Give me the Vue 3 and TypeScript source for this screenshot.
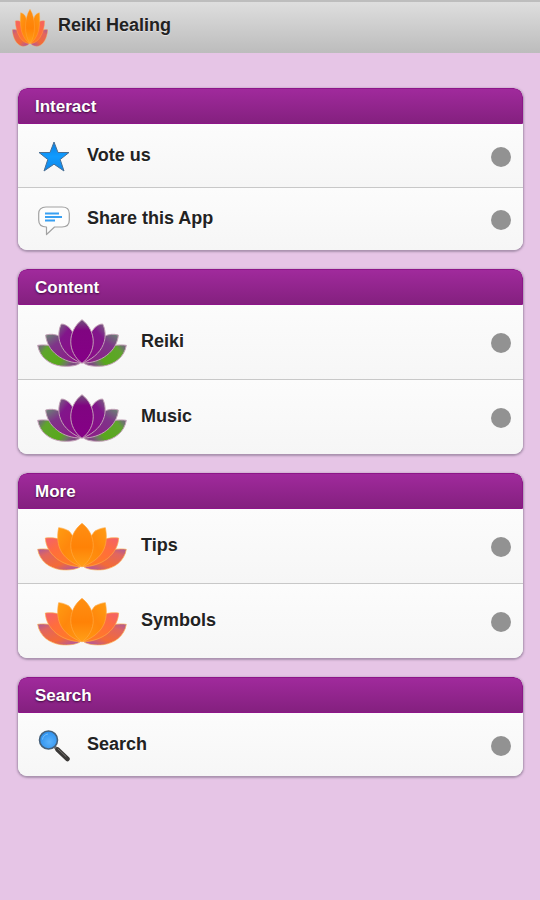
<script setup lang="ts">
type IconName = 'star' | 'chat' | 'lotus-purple' | 'lotus-orange' | 'magnifier'

interface Entry {
  label: string
  icon: IconName
}

interface Section {
  title: string
  entries: Entry[]
}

const sections: Section[] = [
  {
    title: 'Interact',
    entries: [
      { label: 'Vote us', icon: 'star' },
      { label: 'Share this App', icon: 'chat' },
    ],
  },
  {
    title: 'Content',
    entries: [
      { label: 'Reiki', icon: 'lotus-purple' },
      { label: 'Music', icon: 'lotus-purple' },
    ],
  },
  {
    title: 'More',
    entries: [
      { label: 'Tips', icon: 'lotus-orange' },
      { label: 'Symbols', icon: 'lotus-orange' },
    ],
  },
  {
    title: 'Search',
    entries: [{ label: 'Search', icon: 'magnifier' }],
  },
]

const isLotus = (icon: IconName): boolean => icon.startsWith('lotus')
</script>

<template>
  <div class="app">
    <!-- Shared gradients and petal shapes -->
    <svg class="defs" width="0" height="0" aria-hidden="true">
      <defs>
        <linearGradient id="p-outer" x1="0" y1="0" x2="1" y2="0.4">
          <stop offset="0" stop-color="#76607f" />
          <stop offset="0.12" stop-color="#6b7a66" />
          <stop offset="0.24" stop-color="#5fa52c" />
          <stop offset="0.72" stop-color="#58a81b" />
          <stop offset="0.88" stop-color="#6d7a62" />
          <stop offset="1" stop-color="#7d4a80" />
        </linearGradient>
        <linearGradient id="p-third" x1="0" y1="0" x2="0.8" y2="1">
          <stop offset="0" stop-color="#698873" />
          <stop offset="0.35" stop-color="#7f3489" />
          <stop offset="1" stop-color="#8c1c88" />
        </linearGradient>
        <linearGradient id="p-second" x1="0" y1="0" x2="0.7" y2="1">
          <stop offset="0" stop-color="#75697f" />
          <stop offset="0.3" stop-color="#82168b" />
          <stop offset="1" stop-color="#8b0b87" />
        </linearGradient>
        <linearGradient id="p-center" x1="0" y1="0" x2="0" y2="1">
          <stop offset="0" stop-color="#71567b" />
          <stop offset="0.25" stop-color="#800481" />
          <stop offset="1" stop-color="#850086" />
        </linearGradient>
        <linearGradient id="o-outer" x1="0" y1="0" x2="0.8" y2="1">
          <stop offset="0" stop-color="#a65a9e" />
          <stop offset="0.25" stop-color="#e1665f" />
          <stop offset="0.7" stop-color="#f46b36" />
          <stop offset="1" stop-color="#b3579c" />
        </linearGradient>
        <linearGradient id="o-third" x1="0" y1="0" x2="0.8" y2="1">
          <stop offset="0" stop-color="#f2616d" />
          <stop offset="0.4" stop-color="#ff6d3d" />
          <stop offset="1" stop-color="#ff7e20" />
        </linearGradient>
        <linearGradient id="o-second" x1="0" y1="0" x2="0.8" y2="1">
          <stop offset="0" stop-color="#ff9c12" />
          <stop offset="0.5" stop-color="#ff870c" />
          <stop offset="1" stop-color="#ff9510" />
        </linearGradient>
        <linearGradient id="o-center" x1="0" y1="0" x2="0" y2="1">
          <stop offset="0" stop-color="#ff8f13" />
          <stop offset="0.55" stop-color="#ff8206" />
          <stop offset="1" stop-color="#ffa018" />
        </linearGradient>
        <linearGradient id="star-fill" x1="0" y1="0" x2="0" y2="1">
          <stop offset="0" stop-color="#0b7ee0" />
          <stop offset="0.5" stop-color="#109bff" />
          <stop offset="1" stop-color="#1186e6" />
        </linearGradient>
        <radialGradient id="lens-fill" cx="0.55" cy="0.6" r="0.6">
          <stop offset="0" stop-color="#5bb2fb" />
          <stop offset="1" stop-color="#2b8fee" />
        </radialGradient>

        <g id="lotus-purple-side">
          <path d="M36 107C84 100 132 124 163 161C150 170 128 171 105 169C70 164 42 142 36 107Z" fill="url(#p-outer)" />
          <path d="M60 76C75 72 88 74 98 78C130 94 152 124 164 160C140 160 114 152 95 137C74 121 62 100 60 76Z" fill="url(#p-third)" />
          <path d="M107 43C116 43 124 48 131 54C152 78 163 118 167 160C142 150 116 132 105 104C96 82 99 58 107 43Z" fill="url(#p-second)" />
        </g>
        <g id="lotus-orange-side">
          <path d="M36 105C84 98 132 122 163 158C150 166 128 168 105 166C70 161 42 140 36 105Z" fill="url(#o-outer)" />
          <path d="M59 71C75 69 90 71 100 74C132 92 152 122 164 157C140 157 113 148 93 133C71 115 60 94 59 71Z" fill="url(#o-third)" />
          <path d="M99 40C112 41 124 46 132 52C152 76 163 116 167 157C142 148 114 130 103 104C94 82 95 58 99 40Z" fill="url(#o-second)" />
        </g>
        <symbol id="lotus-purple" viewBox="34 28 270 144" preserveAspectRatio="none">
          <g stroke="#c2a0b6" stroke-width="3" stroke-linejoin="round">
            <use href="#lotus-purple-side" />
            <use href="#lotus-purple-side" transform="matrix(-1 0 0 1 338 0)" />
            <path d="M169 30C215 66 213 128 169 161C125 128 123 66 169 30Z" fill="url(#p-center)" />
          </g>
        </symbol>
        <symbol id="lotus-orange" viewBox="34 26 270 144" preserveAspectRatio="none">
          <g stroke="#ffab45" stroke-width="2" stroke-linejoin="round">
            <use href="#lotus-orange-side" />
            <use href="#lotus-orange-side" transform="matrix(-1 0 0 1 338 0)" />
            <path d="M169 27C215 63 213 125 169 158C125 125 123 63 169 27Z" fill="url(#o-center)" />
          </g>
        </symbol>
        <symbol id="star" viewBox="0 0 32 32">
          <path
            d="M16 1L20 11.500H31L22.200 18.500L26 30L16 23.200L6 30L9.800 18.500L1 11.500H12Z"
            fill="url(#star-fill)" stroke="#4b6f93" stroke-width="1"
          />
        </symbol>
        <symbol id="chat" viewBox="0 0 32 32">
          <path
            d="M8 3H24C29 3 31.300 6 31.300 9.500V16C31.300 20 29 23 24 23H16.500L8.500 30.500V23C3 23 .7 20 .7 16V9.500C.7 6 3 3 8 3Z"
            fill="#fdfdfd" stroke="#a2a2a2" stroke-width="1.2" stroke-linejoin="round"
          />
          <path d="M7 9.500H21M7 13H24M7 16.500H17" fill="none" stroke="#38a0f2" stroke-width="1.8" />
        </symbol>
        <symbol id="magnifier" viewBox="0 0 32 32">
          <path d="M16 16L20 20.500" stroke="#77736f" stroke-width="3" />
          <path d="M19.500 19.500L29.500 29" stroke="#3b3937" stroke-width="4.500" stroke-linecap="round" />
          <path d="M20 19L28 26.500" stroke="#77736f" stroke-width="1" stroke-linecap="round" />
          <circle cx="10.500" cy="10" r="9" fill="url(#lens-fill)" stroke="#45607a" stroke-width="1.600" />
          <path d="M4.500 9.500A6.500 6.500 0 0 1 10 4" fill="none" stroke="#75bdf8" stroke-width="1" />
        </symbol>
      </defs>
    </svg>

    <header class="bar">
      <svg class="logo" aria-hidden="true"><use href="#lotus-orange" /></svg>
      <h1 class="bar-title">Reiki Healing</h1>
    </header>

    <main class="content">
      <section v-for="section in sections" :key="section.title" class="card">
        <h2 class="card-title">{{ section.title }}</h2>
        <ul class="list">
          <li v-for="entry in section.entries" :key="entry.label" class="item">
            <a href="#" class="row" :class="{ tall: isLotus(entry.icon) }">
              <svg class="icon" aria-hidden="true"><use :href="'#' + entry.icon" /></svg>
              <span class="label">{{ entry.label }}</span>
              <span class="dot"></span>
            </a>
          </li>
        </ul>
      </section>
    </main>
  </div>
</template>

<style>
body {
  margin: 0;
  background: #e6c5e6;
}
</style>

<style scoped>
.app {
  min-height: 100vh;
  background: #e6c5e6;
  font-family: "Liberation Sans", Arial, sans-serif;
  color: #222;
}

.defs {
  position: absolute;
}

.bar {
  display: flex;
  align-items: center;
  gap: 10px;
  box-sizing: border-box;
  height: 53px;
  padding: 0 12px;
  border-top: 2px solid #bdbdbd;
  background: linear-gradient(#dedede, #bcbcbc);
}

.logo {
  width: 36px;
  height: 38px;
}

.bar-title {
  margin: 0;
  padding-bottom: 6px;
  font-size: 18px;
  line-height: 22px;
  font-weight: bold;
  text-shadow: 0 1px 1px #e4e4e4;
}

.content {
  display: flex;
  flex-direction: column;
  gap: 19px;
  padding: 35px 17px 18px 18px;
}

.card {
  overflow: hidden;
  border-radius: 9px;
  background: #f8f8f8;
  box-shadow: 0 1px 2px 1px rgba(110, 95, 120, 0.5);
}

.card-title {
  box-sizing: border-box;
  height: 36px;
  margin: 0;
  padding: 0 16px;
  border: 1px solid #8d1689;
  border-radius: 9px 9px 0 0;
  background: linear-gradient(#a02a9c, #84207f);
  color: #fff;
  font-size: 17px;
  line-height: 35px;
  font-weight: bold;
  text-shadow: 0 1px 2px #3c0a3a;
}

.list {
  margin: 0;
  padding: 0;
  list-style: none;
}

.row {
  display: flex;
  align-items: center;
  box-sizing: border-box;
  height: 63px;
  padding: 2px 12px 0 20px;
  background: linear-gradient(#fcfcfc, #f6f6f6);
  color: #222;
  text-decoration: none;
}

.row.tall {
  height: 74px;
  padding-left: 19px;
}

.item + .item .row {
  border-top: 1px solid #c8c8c8;
}

.item + .item .row.tall {
  height: 75px;
}

.icon {
  flex: none;
  width: 32px;
  height: 32px;
  margin-right: 17px;
}

.tall .icon {
  width: 90px;
  height: 48px;
  margin-right: 14px;
}

.label {
  flex: 1;
  padding-bottom: 4px;
  font-size: 18px;
  line-height: 22px;
  font-weight: bold;
  text-shadow: 0 1px 0 #fff;
}

.dot {
  flex: none;
  width: 20px;
  height: 20px;
  border-radius: 50%;
  background: #929292;
}
</style>
